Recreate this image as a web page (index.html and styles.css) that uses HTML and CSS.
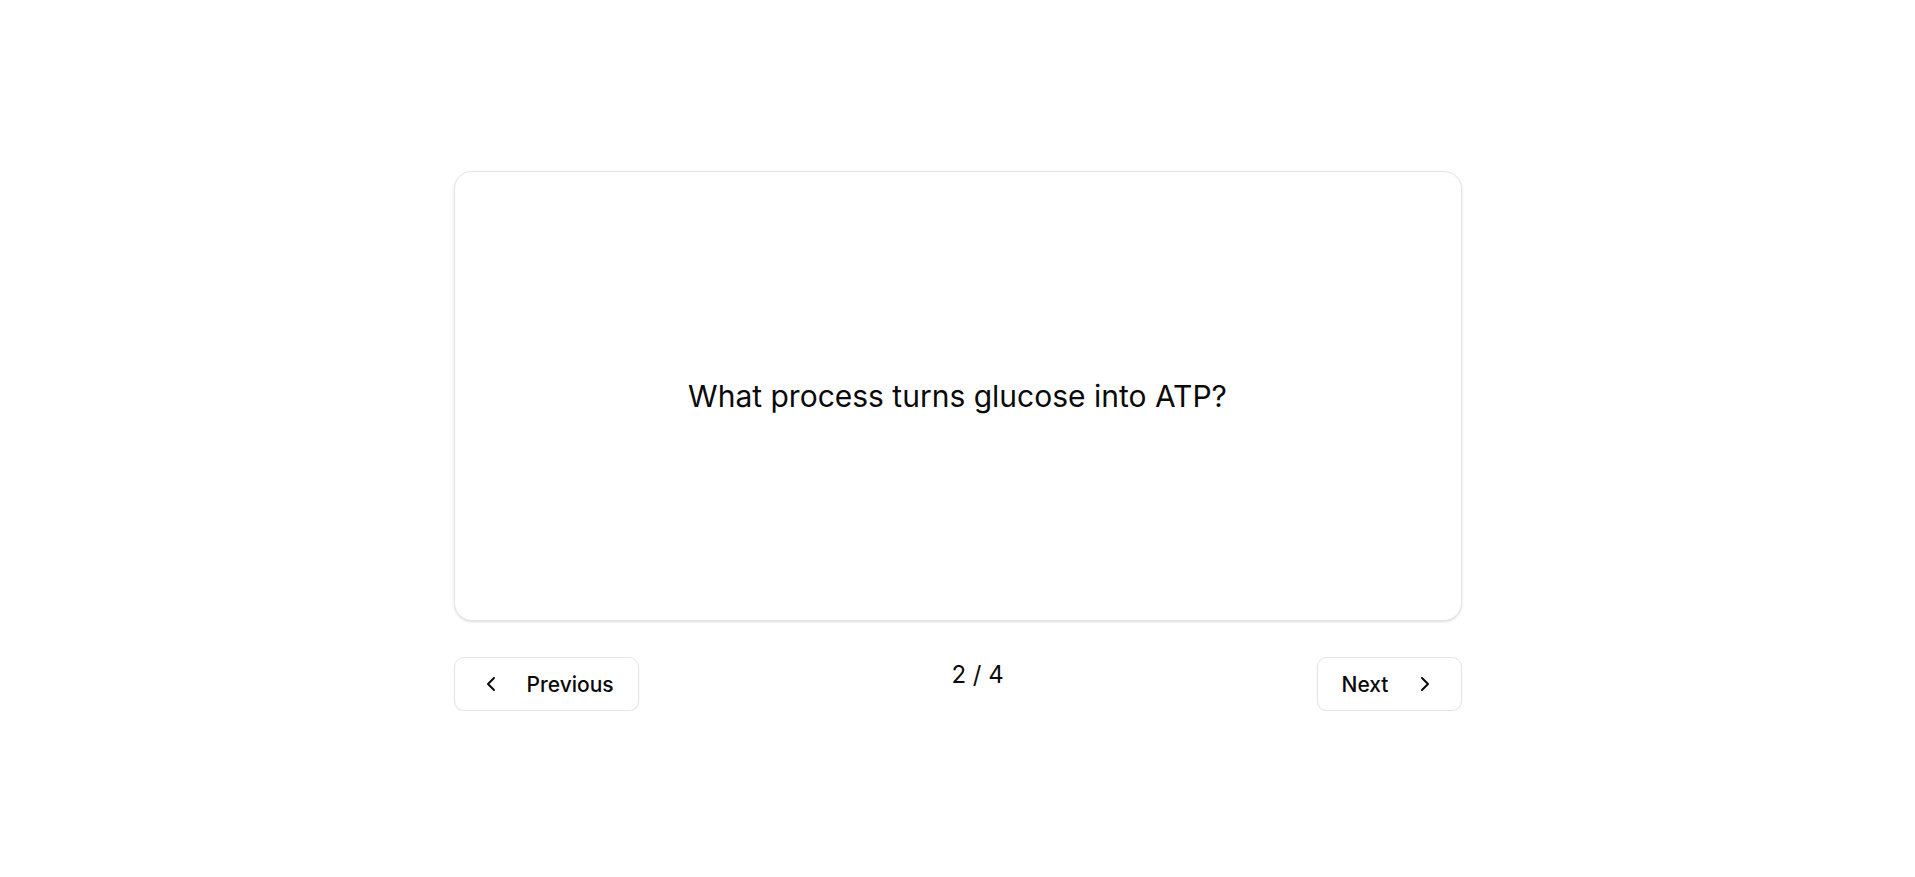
FILE: index.html
```html
<!DOCTYPE html>
<html lang="en">
<head>
<meta charset="utf-8">
<title>Flashcards</title>
<link rel="stylesheet" href="styles.css">
</head>
<body>
<main class="page">
  <div class="deck">
    <div class="card">
      <p class="question">What process turns glucose into ATP?</p>
    </div>
    <div class="controls">
      <button class="btn" type="button">
        <svg class="icon" viewBox="0 0 24 24" fill="none" stroke="currentColor" stroke-width="2" stroke-linecap="round" stroke-linejoin="round"><path d="m15 18-6-6 6-6"/></svg>
        <span>Previous</span>
      </button>
      <span class="counter">2 / 4</span>
      <button class="btn" type="button">
        <span>Next</span>
        <svg class="icon" viewBox="0 0 24 24" fill="none" stroke="currentColor" stroke-width="2" stroke-linecap="round" stroke-linejoin="round"><path d="m9 18 6-6-6-6"/></svg>
      </button>
    </div>
  </div>
</main>
</body>
</html>
```
FILE: styles.css
```css
* { box-sizing: border-box; }
html, body { margin: 0; background: #ffffff; }
body {
  font-family: Inter, "Noto Sans", sans-serif;
  color: #0a0a0a;
}
.page {
  display: flex;
  justify-content: center;
  padding-top: 171px;
}
.deck {
  width: 1008px;
  display: flex;
  flex-direction: column;
  gap: 36px;
}
.card {
  height: 450px;
  border: 1px solid #e5e5e5;
  border-radius: 18px;
  background: #ffffff;
  box-shadow: 0 1px 3px 0 rgba(0,0,0,0.1), 0 1px 2px -1px rgba(0,0,0,0.1);
  display: flex;
  align-items: center;
  justify-content: center;
}
.question {
  margin: 0;
  font-size: 30px;
  line-height: 42px;
}
.controls {
  display: flex;
  justify-content: space-between;
  align-items: flex-start;
}
.counter {
  font-size: 24px;
  line-height: 36px;
}
.btn {
  height: 54px;
  display: inline-flex;
  align-items: center;
  gap: 24px;
  padding: 0 24px;
  border: 1px solid #e5e5e5;
  border-radius: 10px;
  background: #ffffff;
  box-shadow: 0 1px 2px 0 rgba(0,0,0,0.05);
  font-family: inherit;
  font-size: 21px;
  font-weight: 500;
  color: #0a0a0a;
  cursor: pointer;
}
.icon {
  width: 24px;
  height: 24px;
  flex: none;
}
```
